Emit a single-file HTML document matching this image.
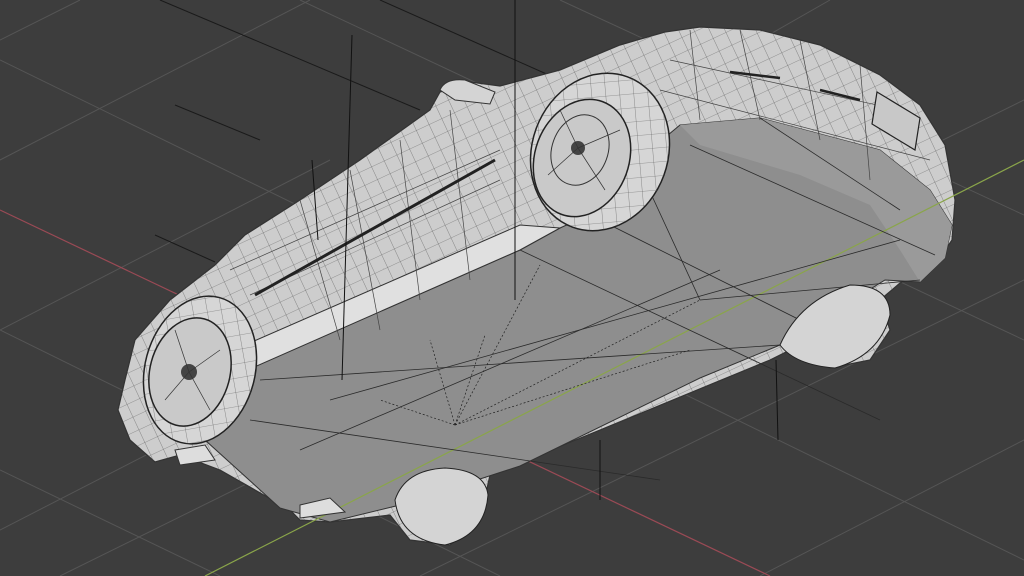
<!DOCTYPE html>
<html><head><meta charset="utf-8"><style>
html,body{margin:0;padding:0;background:#3d3d3d;overflow:hidden}
svg{display:block}
</style></head><body>
<svg width="1024" height="576" viewBox="0 0 1024 576" xmlns="http://www.w3.org/2000/svg">
<defs>
<pattern id="w" width="14" height="14" patternUnits="userSpaceOnUse" patternTransform="rotate(-25)">
<path d="M0,0 L0,14 M0,0 L14,0" stroke="#555" stroke-width="0.6" fill="none"/>
</pattern>
</defs>
<rect width="1024" height="576" fill="#3d3d3d"/>
<g stroke="#555" stroke-width="1">
<line x1="0" y1="60" x2="1024" y2="560"/>
<line x1="0" y1="330" x2="500" y2="576"/>
<line x1="0" y1="470" x2="220" y2="576"/>
<line x1="300" y1="0" x2="1024" y2="340"/>
<line x1="560" y1="0" x2="1024" y2="215"/>
<line x1="0" y1="330" x2="330" y2="160"/>
<line x1="0" y1="530" x2="760" y2="140"/>
<line x1="60" y1="576" x2="1024" y2="100"/>
<line x1="420" y1="576" x2="1024" y2="280"/>
<line x1="760" y1="576" x2="1024" y2="440"/>
<line x1="80" y1="0" x2="0" y2="40"/>
<line x1="830" y1="0" x2="760" y2="40"/>
<line x1="0" y1="160" x2="310" y2="0"/>
</g>
<g stroke="#1a1a1a" stroke-width="1">
<line x1="160" y1="0" x2="420" y2="110"/>
<line x1="380" y1="0" x2="560" y2="80"/>
<line x1="175" y1="105" x2="260" y2="140"/>
<line x1="155" y1="235" x2="215" y2="262"/>
</g>
<line x1="0" y1="210" x2="770" y2="576" stroke="#9a4a55" stroke-width="1.2"/>
<path id="sil" d="M135,340 L170,300 L215,265 L245,235 L300,200 L360,160 L430,110 L440,92 L470,82 L500,86 L560,70 L620,45 L665,32 L700,27 L760,30 L820,45 L880,75 L920,105 L945,145 L955,200 L952,240 L935,265 L900,283 L880,300 L890,330 L870,360 L830,368 L790,350 L770,360 L600,430 L490,475 L480,520 L450,545 L410,540 L390,515 L330,522 L300,520 L290,510 L220,470 L180,455 L155,462 L130,440 L118,410 L125,380 Z" fill="#cdcdcd" stroke="#333" stroke-width="1.2"/>
<path d="M135,340 L170,300 L215,265 L245,235 L300,200 L360,160 L430,110 L440,92 L470,82 L500,86 L560,70 L620,45 L665,32 L700,27 L760,30 L820,45 L880,75 L920,105 L945,145 L955,200 L952,240 L935,265 L900,283 L880,300 L890,330 L870,360 L830,368 L790,350 L770,360 L600,430 L490,475 L480,520 L450,545 L410,540 L390,515 L330,522 L300,520 L290,510 L220,470 L180,455 L155,462 L130,440 L118,410 L125,380 Z" fill="url(#w)"/>
<path d="M205,440 L252,368 L520,250 L560,228 L600,210 L650,150 L680,125 L760,118 L880,150 L930,190 L952,225 L945,258 L920,282 L885,280 L780,345 L700,378 L520,466 L400,505 L330,522 L280,508 Z" fill="#8e8e8e" stroke="#333" stroke-width="1"/>
<path d="M680,125 L760,118 L880,150 L930,190 L952,225 L945,258 L920,282 L900,250 L870,205 L800,175 L700,145 Z" fill="#9a9a9a"/>
<path d="M245,345 L520,225 L560,228 L520,250 L252,368 Z" fill="#e0e0e0" stroke="#333" stroke-width="1"/>
<line x1="205" y1="576" x2="1024" y2="160" stroke="#8aa54a" stroke-width="1.2"/>
<g stroke="#2a2a2a" stroke-width="0.8" fill="none">
<line x1="260" y1="380" x2="780" y2="345"/>
<line x1="330" y1="400" x2="900" y2="240"/>
<line x1="300" y1="450" x2="720" y2="270"/>
<line x1="520" y1="250" x2="880" y2="420"/>
<line x1="580" y1="210" x2="820" y2="330"/>
<line x1="640" y1="170" x2="700" y2="300"/>
<line x1="700" y1="300" x2="920" y2="280"/>
<line x1="250" y1="420" x2="660" y2="480"/>
<line x1="690" y1="145" x2="935" y2="255"/>
<line x1="760" y1="118" x2="900" y2="210"/>
</g>
<g stroke="#222" stroke-width="0.7" stroke-dasharray="2,2" fill="none">
<line x1="455" y1="425" x2="540" y2="265"/>
<line x1="455" y1="425" x2="700" y2="300"/>
<line x1="455" y1="425" x2="430" y2="340"/>
<line x1="455" y1="425" x2="380" y2="400"/>
<line x1="455" y1="425" x2="690" y2="350"/>
<line x1="455" y1="425" x2="485" y2="335"/>
</g>
<g stroke="#444" stroke-width="0.7" fill="none">
<path d="M300,200 L340,340 M350,170 L380,330 M400,140 L420,300 M450,110 L470,280 M230,270 L500,150 M250,295 L500,180"/>
<path d="M690,30 L700,120 M740,30 L760,120 M800,40 L820,140 M860,65 L870,180 M670,60 L900,110 M660,90 L930,160"/>
<path d="M255,295 L495,160" stroke="#222" stroke-width="3"/>
<path d="M730,72 L780,78 M820,90 L860,100" stroke="#222" stroke-width="2.5"/>
</g>
<path d="M877,92 L920,118 L915,150 L872,124 Z" fill="#c8c8c8" stroke="#222" stroke-width="1.2"/>
<path d="M440,90 Q445,78 465,80 L495,92 L490,104 L455,100 Z" fill="#d4d4d4" stroke="#333"/>
<g>
<ellipse cx="600" cy="152" rx="68" ry="80" transform="rotate(20 600 152)" fill="#d6d6d6" stroke="#222" stroke-width="1.5"/>
<ellipse cx="600" cy="152" rx="68" ry="80" transform="rotate(20 600 152)" fill="url(#w)"/>
<ellipse cx="582" cy="158" rx="47" ry="60" transform="rotate(20 582 158)" fill="#c9c9c9" stroke="#222" stroke-width="1.5"/>
<ellipse cx="580" cy="150" rx="28" ry="36" transform="rotate(20 580 150)" fill="none" stroke="#333"/>
<circle cx="578" cy="148" r="7" fill="#444"/>
<g stroke="#333" stroke-width="0.7"><line x1="578" y1="148" x2="560" y2="110"/><line x1="578" y1="148" x2="620" y2="130"/><line x1="578" y1="148" x2="605" y2="190"/><line x1="578" y1="148" x2="548" y2="175"/></g>
</g>
<g>
<ellipse cx="200" cy="370" rx="55" ry="75" transform="rotate(15 200 370)" fill="#d6d6d6" stroke="#222" stroke-width="1.5"/>
<ellipse cx="200" cy="370" rx="55" ry="75" transform="rotate(15 200 370)" fill="url(#w)"/>
<ellipse cx="190" cy="372" rx="40" ry="55" transform="rotate(15 190 372)" fill="#c9c9c9" stroke="#222" stroke-width="1.5"/>
<circle cx="189" cy="372" r="8" fill="#444"/>
<g stroke="#333" stroke-width="0.7"><line x1="189" y1="372" x2="175" y2="330"/><line x1="189" y1="372" x2="220" y2="350"/><line x1="189" y1="372" x2="210" y2="410"/><line x1="189" y1="372" x2="165" y2="400"/></g>
</g>
<path d="M395,500 Q405,470 445,468 Q485,470 488,495 Q485,535 445,545 Q400,540 395,500 Z" fill="#d4d4d4" stroke="#222"/>
<path d="M780,345 Q800,300 850,285 Q890,285 890,315 Q880,355 835,368 Q795,365 780,345 Z" fill="#d4d4d4" stroke="#222"/>
<path d="M175,450 L205,445 L215,460 L180,465 Z" fill="#ddd" stroke="#333"/>
<path d="M300,505 L330,498 L345,512 L300,518 Z" fill="#ddd" stroke="#333"/>
<g stroke="#111" stroke-width="1">
<line x1="515" y1="0" x2="515" y2="300"/>
<line x1="352" y1="35" x2="342" y2="380"/>
<line x1="776" y1="360" x2="778" y2="440"/>
<line x1="600" y1="440" x2="600" y2="500"/>
<line x1="312" y1="160" x2="318" y2="240"/>
</g>
</svg>
</body></html>
